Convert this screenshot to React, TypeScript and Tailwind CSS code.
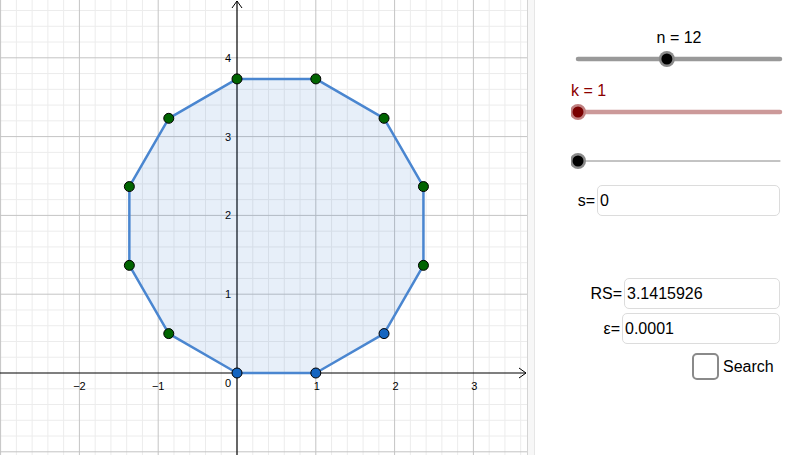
import React from 'react';

const OX = 237;
const OY = 373;
const U = 78.8;
const W = 527;
const H = 455;

const vertices: [number, number][] = [
  [0, 0],
  [1, 0],
  [1.866, 0.5],
  [2.366, 1.366],
  [2.366, 2.366],
  [1.866, 3.232],
  [1, 3.732],
  [0, 3.732],
  [-0.866, 3.232],
  [-1.366, 2.366],
  [-1.366, 1.366],
  [-0.866, 0.5],
];

const px = (x: number) => OX + x * U;
const py = (y: number) => OY - y * U;

function Graph() {
  const minorX: number[] = [];
  const minorY: number[] = [];
  for (let i = -20; i <= 30; i++) {
    const x = OX + i * (U / 5);
    if (x >= 0 && x <= W && i % 5 !== 0) minorX.push(x);
    const y = OY - i * (U / 5);
    if (y >= 0 && y <= H && i % 5 !== 0) minorY.push(y);
  }
  const majorX = [-3, -2, -1, 1, 2, 3, 4].map(px).filter((x) => x >= 0 && x <= W);
  const majorY = [-1, 1, 2, 3, 4, 5].map(py).filter((y) => y >= 0 && y <= H);
  const pts = vertices.map(([x, y]) => `${px(x)},${py(y)}`).join(' ');

  return (
    <svg width={W} height={H} className="block shrink-0" style={{ fontFamily: '"Liberation Sans", Arial, sans-serif' }}>
      <rect width={W} height={H} fill="#ffffff" />
      {minorX.map((x) => (
        <line key={'mx' + x} x1={x} y1={0} x2={x} y2={H} stroke="#ececec" strokeWidth={1} />
      ))}
      {minorY.map((y) => (
        <line key={'my' + y} x1={0} y1={y} x2={W} y2={y} stroke="#ececec" strokeWidth={1} />
      ))}
      {majorX.map((x) => (
        <line key={'Mx' + x} x1={x} y1={0} x2={x} y2={H} stroke="#c4c4c4" strokeWidth={1} />
      ))}
      {majorY.map((y) => (
        <line key={'My' + y} x1={0} y1={y} x2={W} y2={y} stroke="#c4c4c4" strokeWidth={1} />
      ))}

      {/* axes */}
      <line x1={0} y1={OY} x2={W - 1} y2={OY} stroke="#000" strokeWidth={1.2} />
      <polyline points={`${W - 8},${OY - 5} ${W - 1},${OY} ${W - 8},${OY + 5}`} fill="none" stroke="#000" strokeWidth={1} />
      <line x1={OX} y1={1} x2={OX} y2={H} stroke="#000" strokeWidth={1.2} />
      <polyline points={`${OX - 5},${8} ${OX},${1} ${OX + 5},${8}`} fill="none" stroke="#000" strokeWidth={1} />

      {/* tick labels */}
      {[-2, -1, 1, 2, 3].map((n) => (
        <text key={'tx' + n} x={px(n) + (n < 0 ? 0 : 1)} y={OY + 17} fontSize={11} textAnchor="middle" fill="#000">
          {n < 0 ? '\u2212' + -n : n}
        </text>
      ))}
      <text x={OX - 9} y={OY + 14} fontSize={11} textAnchor="middle" fill="#000">0</text>
      {[1, 2, 3, 4].map((n) => (
        <text key={'ty' + n} x={OX - 9} y={py(n) + 4} fontSize={11} textAnchor="middle" fill="#000">
          {n}
        </text>
      ))}

      {/* polygon */}
      <polygon points={pts} fill="#1565c0" fillOpacity={0.1} stroke="#4a86d0" strokeWidth={2.5} strokeLinejoin="round" />
      {vertices.map(([x, y], i) => (
        <circle
          key={'p' + i}
          cx={px(x)}
          cy={py(y)}
          r={5}
          fill={i < 3 ? '#1565c0' : '#006400'}
          stroke="#000"
          strokeWidth={1}
        />
      ))}
    </svg>
  );
}

function Slider({ value, color, track, ring, thin }: { value: number; color: string; track: string; ring: string; thin?: boolean }) {
  const x0 = 7;
  const x1 = 209;
  const cx = x0 + (x1 - x0) * value;
  return (
    <svg width={216} height={18} className="block">
      <line x1={x0} y1={9} x2={x1} y2={9} stroke={track} strokeWidth={thin ? 1 : 4.5} strokeLinecap="round" />
      <circle cx={cx} cy={9} r={8} fill={ring} />
      <circle cx={cx} cy={9} r={5.5} fill={color} />
    </svg>
  );
}

function Field({ label, value, width }: { label: string; value: string; width: number }) {
  return (
    <div className="flex items-center justify-end pr-[25px]">
      <span className="mr-[2px] text-[16px] text-black">{label}</span>
      <div
        className="h-[31px] rounded-[5px] border border-[#dcdcdc] bg-white pl-[2px] text-[16px] leading-[29px] text-black"
        style={{ width }}
      >
        {value}
      </div>
    </div>
  );
}

export default function App() {
  return (
    <div
      className="flex h-[455px] w-[805px] overflow-hidden bg-white"
      style={{ fontFamily: '"Liberation Sans", Arial, sans-serif' }}
    >
      <Graph />
      <div className="w-[8px] shrink-0 border-l border-r border-l-[#d4d4d4] border-r-[#e6e6e6] bg-[#f7f7f7]" />
      <div className="flex flex-1 flex-col">
        <div className="pl-[36px] pt-[29px]">
          <div className="w-[216px] text-center text-[16px] leading-[18px] text-black">n = 12</div>
          <div className="mt-[3px]">
            <Slider value={0.44} color="#000000" track="#999999" ring="#8a8a8a" />
          </div>
          <div className="mt-[14px] text-[16px] leading-[18px] text-[#8b0000]">k = 1</div>
          <div className="mt-[3px]">
            <Slider value={0} color="#7a0000" track="#cc9999" ring="#c08080" />
          </div>
          <div className="mt-[31px]">
            <Slider value={0} color="#000000" track="#888888" ring="#8a8a8a" thin />
          </div>
        </div>
        <div className="mt-[15px]">
          <Field label="s=" value="0" width={183} />
        </div>
        <div className="mt-[62px]">
          <Field label="RS=" value="3.1415926" width={156} />
        </div>
        <div className="mt-[4px]">
          <Field label="ε=" value="0.0001" width={158} />
        </div>
        <div className="mt-[9px] flex items-center pl-[157px]">
          <div className="h-[27px] w-[27px] rounded-[5px] border-2 border-[#8a8a8a] bg-white" />
          <span className="ml-[4px] text-[16px] text-black">Search</span>
        </div>
      </div>
    </div>
  );
}
